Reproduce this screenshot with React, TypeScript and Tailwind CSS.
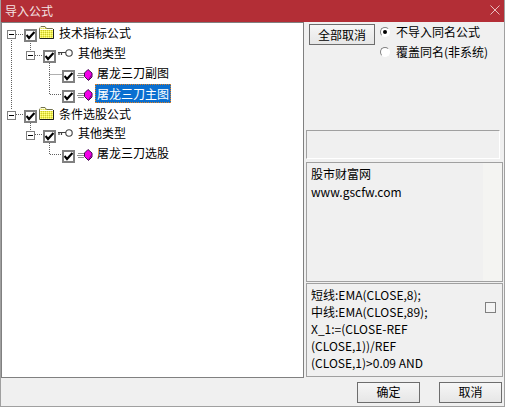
import React from "react";

const font = { fontFamily: '"Noto Sans CJK SC", sans-serif' };

function Check() {
  return (
    <span className="mt-[3px] w-[13px] h-[13px] shrink-0 border-2 border-[#808080] bg-white flex items-center justify-center">
      <svg width="9" height="9" viewBox="0 0 9 9"><path d="M0.5 4 L3 7 L8.5 1" fill="none" stroke="#000" strokeWidth="2.2" /></svg>
    </span>
  );
}

function Folder() {
  return (
    <svg width="15" height="13" viewBox="0 0 15 13" className="shrink-0">
      <defs>
        <pattern id="dither" width="2" height="2" patternUnits="userSpaceOnUse">
          <rect width="2" height="2" fill="#f4f050" />
          <rect width="1" height="1" fill="#c8c830" />
          <rect x="1" y="1" width="1" height="1" fill="#ffff90" />
        </pattern>
      </defs>
      <path d="M0.5 12.5 V2.5 L2 0.5 H6 L7.5 2.5 H13.5 L14.5 3.5 V12.5 Z" fill="url(#dither)" stroke="#707050" />
      <path d="M1 1.8 H6 M1 3.5 H14" stroke="#fff" />
      <path d="M14.5 3 V12.5 H1" fill="none" stroke="#202020" />
    </svg>
  );
}

function Key() {
  return (
    <svg width="15" height="8" viewBox="0 0 15 8" className="shrink-0">
      <circle cx="11" cy="4" r="3.2" fill="#fff" stroke="#404040" strokeWidth="1.1" />
      <path d="M0 3.5 H8 M1 3.5 V6 M3.5 3.5 V6" stroke="#404040" strokeWidth="1.2" fill="none" />
    </svg>
  );
}

function Gem() {
  return (
    <svg width="16" height="12" viewBox="0 0 16 12" className="shrink-0">
      <path d="M1 4.5 H7 M0 6.5 H7 M1 8.5 H7" stroke="#909090" strokeWidth="1" />
      <path d="M11 0.5 L15 4 V8 L11.5 11.5 L7.5 7.5 V4 Z" fill="#f400e8" stroke="#401050" />
      <path d="M15 5 L11.5 11" stroke="#8a0090" strokeWidth="1" />
    </svg>
  );
}

function Row({ indent, first, exp, icon, iconTop, textTop = "", label, selected }: { indent: string; first?: boolean; exp?: boolean; icon: React.ReactNode; iconTop: string; textTop?: string; label: string; selected?: boolean }) {
  return (
    <div className={`flex items-start ${first ? "h-[21px]" : "h-5"} ${indent}`}>
      {exp && (
        <span className="mt-[4px] w-[9px] h-[9px] border border-[#808080] bg-white flex items-center justify-center mr-[8px] shrink-0">
          <span className="w-[5px] h-px bg-black" />
        </span>
      )}
      <Check />
      <span className={`ml-[2px] flex ${iconTop}`}>{icon}</span>
      {selected ? (
        <span className="ml-[2px] -mt-[3px] px-[2px] h-[19px] leading-[19px] bg-[#0a6fd0] text-white outline-1 outline-dotted outline-[#e08020] -outline-offset-1">{label}</span>
      ) : (
        <span className={`leading-[14px] ${textTop} ${exp ? "ml-[5px]" : "ml-[4px]"}`}>{label}</span>
      )}
    </div>
  );
}

function Btn({ children, className }: { children: React.ReactNode; className: string }) {
  return (
    <button className={`border border-[#6d6d6d] bg-gradient-to-b from-[#f6f6f6] to-[#e6e6e6] text-xs text-black ${className}`}>{children}</button>
  );
}

function Radio({ on, label }: { on?: boolean; label: string }) {
  return (
    <div className="flex items-center h-5">
      <span className="w-[10px] h-[10px] rounded-full border border-t-[#808080] border-l-[#808080] border-r-white border-b-white bg-white flex items-center justify-center shrink-0">
        {on && <span className="w-[4px] h-[4px] rounded-full bg-black" />}
      </span>
      <span className="ml-[6px]">{label}</span>
    </div>
  );
}

export default function App() {
  return (
    <div style={font} className="w-[505px] h-[407px] bg-[#f0f0f0] text-xs text-black overflow-hidden flex flex-col border-l border-b border-r border-[#a0a0a0]">
      <div className="h-[22px] bg-[#b32e36] text-[#f4e4e4] flex items-center justify-between pl-[5px] pr-[5px] -mx-px shrink-0">
        <span className="text-[12px]">导入公式</span>
        <svg width="10" height="10" viewBox="0 0 10 10" className="mb-[3px]"><path d="M0.5 0.5 L9.5 9.5 M9.5 0.5 L0.5 9.5" stroke="#e8c0c0" strokeWidth="1" /></svg>
      </div>
      <div className="flex flex-1 min-h-0">
        <div className="relative w-[303px] h-[356px] shrink-0 bg-white border border-[#808080] pl-[5px] pt-[3px]">
          <svg width="300" height="140" className="absolute left-0 top-0 pointer-events-none">
            <g stroke="#606060" strokeDasharray="1 1" fill="none">
              <path d="M9.5 15 V87 M14 11.5 H22 M14 91.5 H22 M28.5 20 V27 M33 32.5 H41 M47.5 40 V71.5 H60 M47.5 51.5 H60 M28.5 100 V107 M33 111.5 H41 M47.5 120 V131.5 H60" />
            </g>
          </svg>
          <div className="relative flex flex-col">
            <Row first indent="" exp icon={<Folder />} iconTop="mt-0" label="技术指标公式" />
            <Row indent="pl-[19px]" exp icon={<Key />} iconTop="mt-[2px]" textTop="-mt-px" label="其他类型" />
            <Row indent="pl-[55px]" icon={<Gem />} iconTop="mt-[2px]" textTop="-mt-px" label="屠龙三刀副图" />
            <Row indent="pl-[55px]" icon={<Gem />} iconTop="mt-[2px]" label="屠龙三刀主图" selected />
            <Row indent="" exp icon={<Folder />} iconTop="mt-0" label="条件选股公式" />
            <Row indent="pl-[19px]" exp icon={<Key />} iconTop="mt-[2px]" textTop="-mt-px" label="其他类型" />
            <Row indent="pl-[55px]" icon={<Gem />} iconTop="mt-[2px]" textTop="-mt-px" label="屠龙三刀选股" />
          </div>
        </div>
        <div className="flex-1 min-w-0 pl-[2px] flex flex-col">
          <div className="flex h-[108px] pl-[3px]">
            <Btn className="w-[66px] h-[21px] mt-[2px]">全部取消</Btn>
            <div className="ml-[5px]">
              <Radio on label="不导入同名公式" />
              <Radio label="覆盖同名(非系统)" />
            </div>
          </div>
          <div className="h-[29px] w-[194px] border border-t-[#a0a0a0] border-l-[#a0a0a0] border-r-white border-b-white" />
          <div className="mt-[3px] h-[120px] w-[197px] border border-[#a0a0a0] bg-[linear-gradient(to_right,#f0f0f0_176px,#f4f4f2_176px)] px-[4px] pt-[2px] leading-[18px]">
            <div>股市财富网</div>
            <div>www.gscfw.com</div>
          </div>
          <div className="mt-[1px] h-[94px] w-[197px] border border-[#a0a0a0] px-[4px] pt-[2px] leading-[17px] relative">
            <div>短线:EMA(CLOSE,8);</div>
            <div>中线:EMA(CLOSE,89);</div>
            <div>X_1:=(CLOSE-REF</div>
            <div>(CLOSE,1))/REF</div>
            <div>(CLOSE,1)&gt;0.09 AND</div>
            <span className="absolute right-[6px] top-[18px] w-[11px] h-[11px] border border-[#808080] bg-[#f4f4f4]" />
          </div>
        </div>
      </div>
      <div className="h-[28px] flex items-center justify-end pr-[2px] shrink-0">
        <Btn className="w-[63px] h-[21px]">确定</Btn>
        <Btn className="w-[63px] h-[21px] ml-[19px]">取消</Btn>
      </div>
    </div>
  );
}
